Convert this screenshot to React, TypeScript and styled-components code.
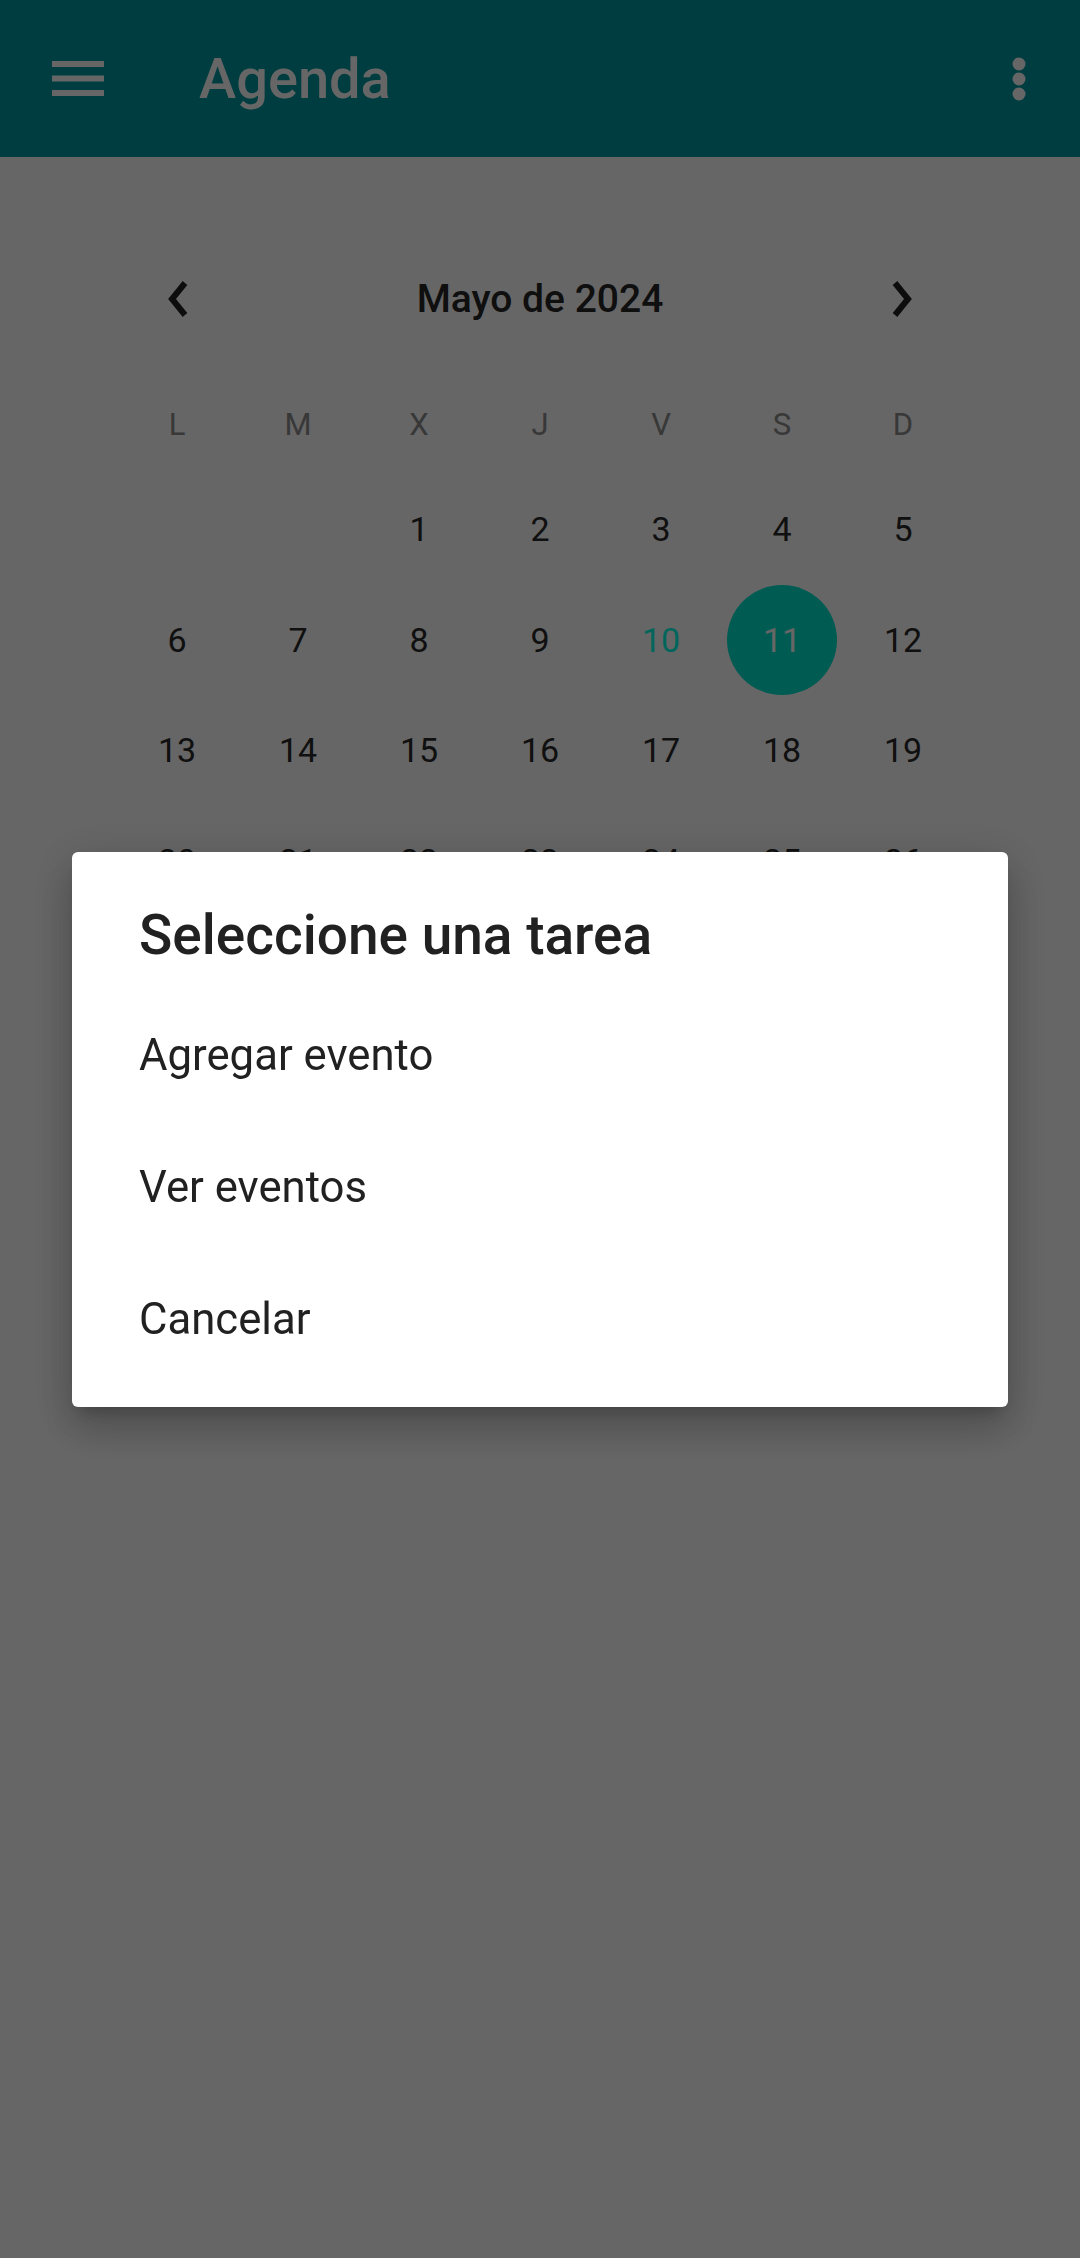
import React from "react";
import styled, { createGlobalStyle } from "styled-components";

const Global = createGlobalStyle`
  html, body {
    margin: 0;
    padding: 0;
    background: #ffffff;
    font-family: Roboto, "Noto Sans", "Liberation Sans", sans-serif;
  }
  #root { min-height: 100vh; }
`;

const Page = styled.div`
  min-height: 2258px;
  background: #ffffff;
`;

const AppBar = styled.header`
  height: 157px;
  background: #0098a0;
  display: flex;
  align-items: center;
  padding: 0 54px 0 52px;
  box-sizing: border-box;
  color: #ffffff;
`;

const Title = styled.h1`
  margin: 0 0 0 95px;
  font-size: 56px;
  line-height: 1;
  font-weight: 500;
  flex: 1;
`;

const IconButton = styled.span`
  display: flex;
  align-items: center;
  justify-content: center;
`;

const Calendar = styled.section`
  width: 847px;
  margin: 87px auto 0;
`;

const Row = styled.div<{ $h: number }>`
  display: grid;
  grid-template-columns: repeat(7, 121px);
  height: ${(p) => p.$h}px;
  align-items: center;
  justify-items: center;
`;

const Month = styled.div`
  grid-column: 2 / span 5;
  font-size: 39px;
  font-weight: 500;
  color: #262626;
`;

const WeekDay = styled.div`
  font-size: 31px;
  color: #8c8c8c;
`;

const Day = styled.div<{ $selected?: boolean; $today?: boolean }>`
  width: 110px;
  height: 110px;
  border-radius: 50%;
  display: flex;
  align-items: center;
  justify-content: center;
  font-size: 34px;
  color: ${(p) => (p.$selected ? "#ffffff" : p.$today ? "#00ffe6" : "#2a2a2a")};
  background: ${(p) => (p.$selected ? "#00e4cd" : "transparent")};
`;

const Scrim = styled.div`
  position: fixed;
  inset: 0;
  background: rgba(0, 0, 0, 0.6);
  display: flex;
  align-items: center;
  justify-content: center;
`;

const Dialog = styled.div`
  width: 936px;
  height: 555px;
  box-sizing: border-box;
  background: #ffffff;
  border-radius: 6px;
  padding: 55px 67px 0;
  box-shadow: 0 11px 15px -7px rgba(0, 0, 0, 0.2),
    0 24px 38px 3px rgba(0, 0, 0, 0.14), 0 9px 46px 8px rgba(0, 0, 0, 0.12);
  display: flex;
  flex-direction: column;
`;

const DialogTitle = styled.h2`
  margin: 0 0 26px;
  font-size: 55px;
  line-height: 56px;
  font-weight: 500;
  color: #212121;
`;

const Item = styled.div`
  height: 132px;
  line-height: 132px;
  font-size: 43.7px;
  color: #212121;
`;

const Menu = () => (
  <svg width="52" height="35" viewBox="0 0 52 35" fill="#ffffff">
    <rect x="0" y="0" width="52" height="6" />
    <rect x="0" y="14.5" width="52" height="6" />
    <rect x="0" y="29" width="52" height="6" />
  </svg>
);

const Kebab = () => (
  <svg width="14" height="44" viewBox="0 0 14 44" fill="#ffffff">
    <circle cx="7" cy="7" r="6.5" />
    <circle cx="7" cy="22" r="6.5" />
    <circle cx="7" cy="37" r="6.5" />
  </svg>
);

const Chevron = ({ dir }: { dir: "l" | "r" }) => (
  <svg width="28" height="40" viewBox="0 0 28 40">
    <polyline
      points={dir === "l" ? "22,4 9,20 22,36" : "6,4 19,20 6,36"}
      fill="none"
      stroke="#212121"
      strokeWidth="6"
    />
  </svg>
);

const weekdays = ["L", "M", "X", "J", "V", "S", "D"];

const buildWeeks = () => {
  const cells: (number | null)[] = [null, null];
  for (let d = 1; d <= 31; d++) cells.push(d);
  while (cells.length % 7) cells.push(null);
  const weeks: (number | null)[][] = [];
  for (let i = 0; i < cells.length; i += 7) weeks.push(cells.slice(i, i + 7));
  return weeks;
};

export default function App() {
  const weeks = buildWeeks();
  return (
    <>
      <Global />
      <Page>
        <AppBar>
          <IconButton>
            <Menu />
          </IconButton>
          <Title>Agenda</Title>
          <IconButton>
            <Kebab />
          </IconButton>
        </AppBar>
        <Calendar>
          <Row $h={110}>
            <IconButton>
              <Chevron dir="l" />
            </IconButton>
            <Month>Mayo de 2024</Month>
            <IconButton>
              <Chevron dir="r" />
            </IconButton>
          </Row>
          <Row $h={20} />
          <Row $h={100}>
            {weekdays.map((w) => (
              <WeekDay key={w}>{w}</WeekDay>
            ))}
          </Row>
          {weeks.map((wk, i) => (
            <Row $h={110.5} key={i}>
              {wk.map((d, j) => (
                <Day key={j} $selected={d === 11} $today={d === 10}>
                  {d ?? ""}
                </Day>
              ))}
            </Row>
          ))}
        </Calendar>
      </Page>
      <Scrim>
        <Dialog>
          <DialogTitle>Seleccione una tarea</DialogTitle>
          <Item>Agregar evento</Item>
          <Item>Ver eventos</Item>
          <Item>Cancelar</Item>
        </Dialog>
      </Scrim>
    </>
  );
}
